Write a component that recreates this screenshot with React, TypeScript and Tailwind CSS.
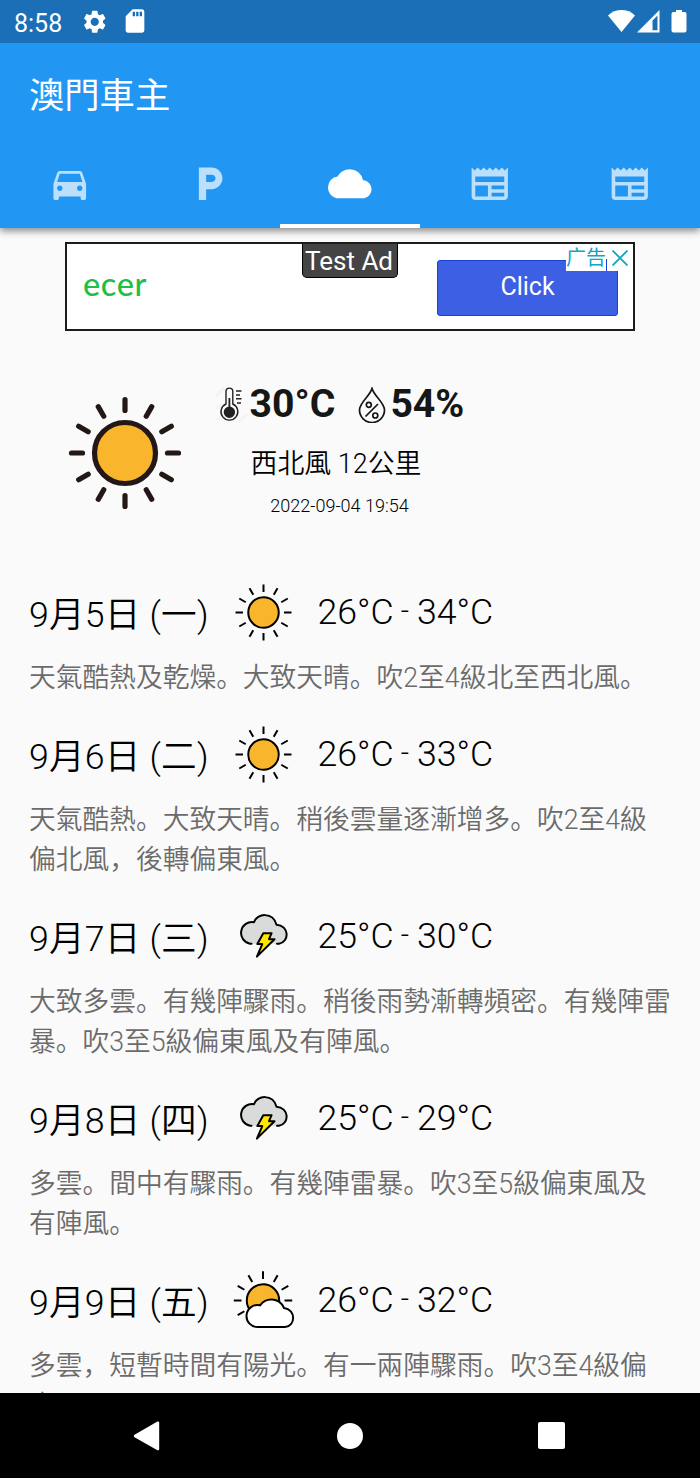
import type { ReactNode } from "react";
import {
  MdCloud,
  MdDirectionsCar,
  MdLocalParking,
  MdNewspaper,
  MdSdCard,
  MdSettings,
} from "react-icons/md";

type Weather = "sunny" | "thunder" | "partly";

type Forecast = {
  date: string;
  weather: Weather;
  low: string;
  high: string;
  text: string;
};

const FORECASTS: Forecast[] = [
  { date: "9月5日 (一)", weather: "sunny", low: "26°C", high: "34°C", text: "天氣酷熱及乾燥。大致天晴。吹2至4級北至西北風。" },
  { date: "9月6日 (二)", weather: "sunny", low: "26°C", high: "33°C", text: "天氣酷熱。大致天晴。稍後雲量逐漸增多。吹2至4級偏北風，後轉偏東風。" },
  { date: "9月7日 (三)", weather: "thunder", low: "25°C", high: "30°C", text: "大致多雲。有幾陣驟雨。稍後雨勢漸轉頻密。有幾陣雷暴。吹3至5級偏東風及有陣風。" },
  { date: "9月8日 (四)", weather: "thunder", low: "25°C", high: "29°C", text: "多雲。間中有驟雨。有幾陣雷暴。吹3至5級偏東風及有陣風。" },
  { date: "9月9日 (五)", weather: "partly", low: "26°C", high: "32°C", text: "多雲，短暫時間有陽光。有一兩陣驟雨。吹3至4級偏東風。" },
];

const RAYS = [0, 30, 60, 90, 120, 150, 180, 210, 240, 270, 300, 330];

export default function App() {
  return (
    <main className="flex h-[1478px] w-[700px] flex-col overflow-hidden bg-[#fafafa] font-['Roboto','Noto_Sans_CJK_SC',sans-serif] text-black">
      <header className="z-10 shrink-0 bg-[#2196f3] text-white shadow-[0_3px_7px_rgba(0,0,0,0.45)]">
        <StatusBar />
        <h1 className="flex h-[101px] items-center pl-[29px] pt-[8px] text-[35.3px] leading-none">澳門車主</h1>
        <Tabs />
      </header>

      <div className="min-h-0 flex-1 overflow-hidden">
        <AdBanner />
        <CurrentWeather />
        <section className="px-[29px] pt-[62px]">
          {FORECASTS.map((item) => (
            <ForecastRow key={item.date} item={item} />
          ))}
        </section>
      </div>

      <NavigationBar />
    </main>
  );
}

function StatusBar() {
  return (
    <div className="flex h-[42.5px] items-center bg-[#1a6fb6] pl-[14px] pr-[13px]">
      <span className="pt-[4px] text-[25px] leading-none">8:58</span>
      <MdSettings className="ml-[19px] size-[27.500px]" />
      <MdSdCard className="ml-[12px] size-[28px]" />
      <svg className="ml-auto h-[24px] w-[80px]" viewBox="0 0 80 24" fill="currentColor">
        <path d="M1 6.500C8.500-.8 20.500-.8 28 6.500L14.500 23Z" />
        <path fillRule="evenodd" d="M30 23.500 52.500 1v22.500ZM45.500 11.500v9.800h5V6.500Z" />
        <path d="M66 3h3V1h6v2h3a2 2 0 0 1 1.500 2v16.500a2 2 0 0 1-2 2h-11a2 2 0 0 1-2-2V5a2 2 0 0 1 1.500-2Z" />
      </svg>
    </div>
  );
}

function Tabs() {
  return (
    <nav className="grid h-[84.500px] grid-cols-5">
      <Tab><MdDirectionsCar /></Tab>
      <Tab><MdLocalParking /></Tab>
      <Tab active><MdCloud /></Tab>
      <Tab><MdNewspaper /></Tab>
      <Tab><MdNewspaper /></Tab>
    </nav>
  );
}

function Tab({ active = false, children }: { active?: boolean; children: ReactNode }) {
  return (
    <button
      type="button"
      className={
        active
          ? "flex items-center justify-center border-b-4 border-white text-[43.500px] text-white"
          : "flex items-center justify-center border-b-4 border-transparent text-[43.500px] text-white/70"
      }
    >
      {children}
    </button>
  );
}

function AdBanner() {
  return (
    <aside className="relative mx-auto mt-[14px] flex h-[89px] w-[570px] items-center justify-between border-2 border-[#1c1c1c] bg-white pl-[16px] pr-[15px]">
      <span className="pb-[5px] font-['Lato',sans-serif] text-[32.500px] font-medium leading-none tracking-[0.6px] text-[#1fbf45]">ecer</span>
      <button type="button" className="mt-[2px] h-[56px] w-[181px] rounded-[3px] border border-[#1740d8] bg-[#3c5fe4] pb-px text-[25px] text-white">
        Click
      </button>
      <span className="absolute left-[234.500px] top-0 flex h-[34px] w-[96px] items-center justify-center rounded-b-[5px] border border-t-0 border-black bg-[#444] pr-px pt-px text-[26px] leading-none text-white">
        Test Ad
      </span>
      <span className="absolute right-0 top-0 flex h-[27px] w-[67px] items-center bg-white text-[20px] leading-none text-[#12a5c4]">
        广告
        <i className="mt-[14px] h-[12px] w-px bg-[#1740d8]" />
        <svg className="ml-[5px] size-[16px]" viewBox="0 0 16 16" fill="none" stroke="currentColor" strokeWidth="1.800">
          <path d="m.5.5 15 15m0-15-15 15" />
        </svg>
      </span>
    </aside>
  );
}

function CurrentWeather() {
  return (
    <section className="flex h-[180px] pl-[67.500px] pt-[54px]">
      <div className="pt-[11px]">
        <SunIcon className="size-[114px]" />
      </div>
      <div className="ml-[33px] flex w-[243px] flex-col items-center">
        <div className="flex h-[40px] items-center self-start text-[39.2px] font-bold leading-none text-[#161616]">
          <ThermometerIcon />
          <span className="ml-[2px]">30°C</span>
          <DropIcon />
          <span className="ml-[4px] whitespace-nowrap">54%</span>
        </div>
        <p className="mt-[20px] text-[26.9px] font-[350] leading-[40px]">西北風 12公里</p>
        <p className="mt-[10px] pl-[7px] text-[18px] font-[350] leading-[24px]">2022-09-04 19:54</p>
      </div>
    </section>
  );
}

function ForecastRow({ item }: { item: Forecast }) {
  return (
    <article className="pb-[17px]">
      <div className="flex h-[80px] items-center text-[35.65px] font-[350] leading-none">
        <h2 className="w-[202.500px] whitespace-nowrap pt-[6px] tracking-[0.2px]">{item.date}</h2>
        <WeatherIcon weather={item.weather} />
        <p className="ml-[22px] flex">
          {item.low}
          <span className="ml-[7px] mr-[8px] text-[29px] leading-[33px]">-</span>
          {item.high}
        </p>
      </div>
      <p className="-mr-[10px] mt-[5px] w-[642px] text-[26.74px] font-[350] leading-[40px] text-[#6b6b6b]">{item.text}</p>
    </article>
  );
}

function WeatherIcon({ weather }: { weather: Weather }) {
  if (weather === "thunder") return <ThunderIcon />;
  if (weather === "partly") return <PartlyCloudyIcon />;

  return (
    <div className="flex h-[64px] w-[64px] justify-center pr-px">
      <SunIcon thin className="mt-[2.500px] size-[57px]" />
    </div>
  );
}

function SunIcon({ thin = false, className }: { thin?: boolean; className: string }) {
  return (
    <svg className={className} viewBox="0 0 114 114" stroke={thin ? "#000" : "#231815"} strokeWidth={thin ? 4 : 5.2}>
      <circle cx="57" cy="57" r="30.500" fill="#f9b52c" />
      {RAYS.map((angle) => (
        <path
          key={angle}
          d={thin ? "M57 1v15" : "M57 3.500v11"}
          strokeLinecap={thin ? "butt" : "round"}
          transform={`rotate(${angle} 57 57)`}
        />
      ))}
    </svg>
  );
}

function ThunderIcon() {
  return (
    <svg className="h-[64px] w-[64px]" viewBox="0 0 64 64" stroke="#000" strokeWidth="2" strokeLinejoin="round">
      <path
        d="M18.500 42.500H17A10.800 10.800 0 1 1 21 21C24 11.800 40 10.500 43.500 23.500 56 24 57 40.500 46 42.500H44"
        fill="#d9dada"
        strokeLinecap="round"
        transform="translate(1 -3.800)"
      />
      <path d="M31.300 28.200h8.300L37 34.200h5.500L24.900 51.600l5.400-12.500h-5Z" fill="#ffe800" />
    </svg>
  );
}

function PartlyCloudyIcon() {
  return (
    <svg className="h-[64px] w-[64px]" viewBox="0 0 64 64" stroke="#000" strokeWidth="2">
      <circle cx="31" cy="31.500" r="16.200" fill="#f9b52c" />
      {RAYS.filter((angle) => angle < 120 || angle > 210).map((angle) => (
        <path key={angle} d="M31 2.300v7.700" transform={`rotate(${angle} 31 31.500)`} />
      ))}
      <path d="M26 58A11 11 0 1 1 28 36.300C34 28.500 47 28 52 39 64 40.500 64 57 53 58Z" fill="#fff" />
    </svg>
  );
}

function ThermometerIcon() {
  return (
    <svg className="h-[36px] w-[33px]" viewBox="0 0 33 36" fill="none" stroke="#222" strokeWidth="1.400">
      <path d="M1 9 9 1M1 22 6 17M2 33l5-5M25 34l7-7" stroke="#f3f3f3" strokeWidth="3" />
      <path d="M11 17V4.500a3.400 3.400 0 0 1 6.800 0V17a8.400 8.400 0 1 1-6.800 0Z" />
      <path d="M14.400 11v12" strokeWidth="1.800" />
      <circle cx="14.400" cy="25.200" r="5" fill="#222" />
      <path d="M21 4h5.500M21 8h4M21 11.800h5.500M22 16h4" strokeWidth="1.500" />
    </svg>
  );
}

function DropIcon() {
  return (
    <svg className="ml-[23px] h-[36px] w-[28px]" viewBox="0 0 28 36" fill="none" stroke="#151515" strokeWidth="1.700">
      <path d="M14 1.500C12 9 1.500 15.500 1.500 23a12.500 12.500 0 0 0 25 0C26.500 15.500 16 9 14 1.500Z" />
      <path d="m7.500 29.500 12.500-12.500" />
      <circle cx="10.800" cy="17.800" r="2.500" />
      <circle cx="17.300" cy="28.500" r="2.500" />
    </svg>
  );
}

function NavigationBar() {
  return (
    <footer className="grid h-[85px] shrink-0 grid-cols-[294px_112px_294px] items-center bg-black text-white">
      <svg className="ml-[133px] size-[30px]" viewBox="0 0 30 30" fill="currentColor">
        <path d="M1.500 13.800 24 .8c1-.6 2.200-.2 2.200 1V28c0 1.200-1.200 1.600-2.200 1L1.500 16.200c-1-.6-1-1.800 0-2.400Z" />
      </svg>
      <span className="mx-auto size-[26px] rounded-full bg-white" />
      <span className="ml-[132px] size-[27px] rounded-[2px] bg-white" />
    </footer>
  );
}
